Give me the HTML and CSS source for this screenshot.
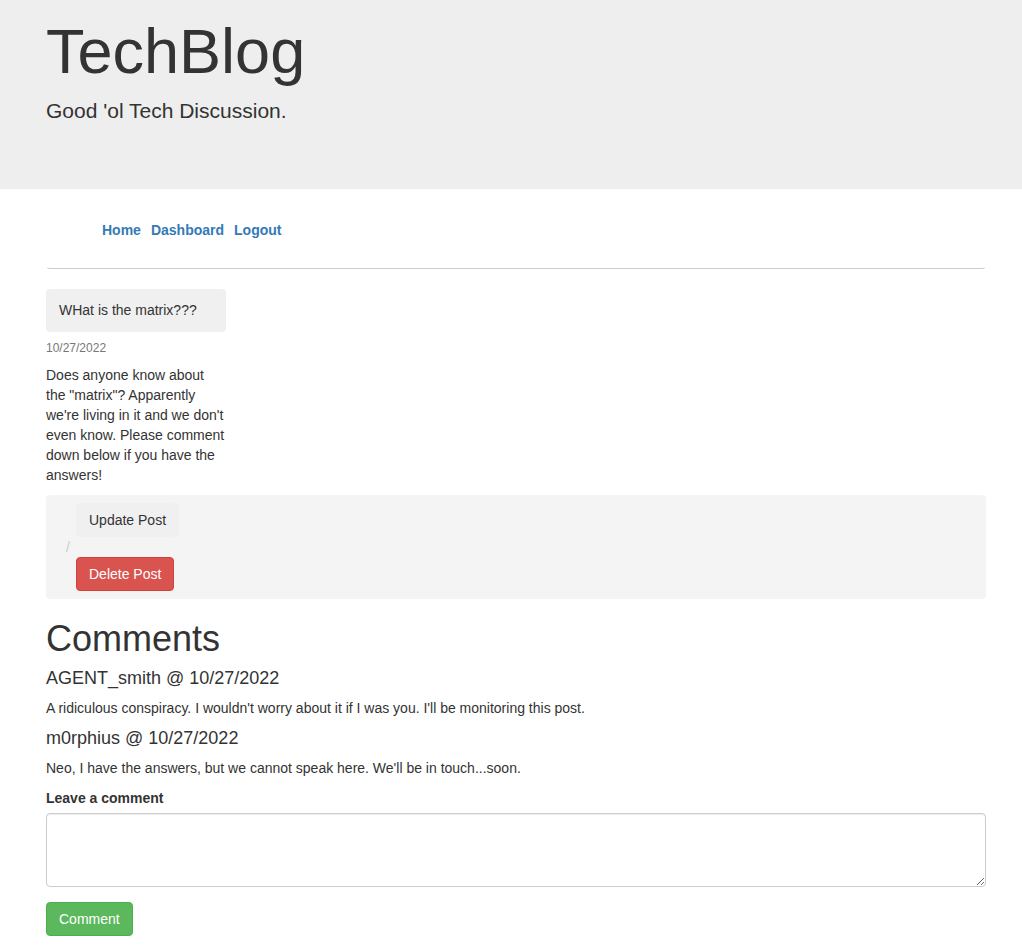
FILE: index.html
```html
<!DOCTYPE html>
<html lang="en">
<head>
<meta charset="utf-8">
<meta name="viewport" content="width=device-width, initial-scale=1">
<title>TechBlog</title>
<link rel="stylesheet" href="styles.css">
</head>
<body>
<header class="jumbotron">
  <h1 class="brand">TechBlog</h1>
  <p class="lead">Good 'ol Tech Discussion.</p>
</header>
<nav class="nav">
  <a href="#">Home</a>
  <a href="#">Dashboard</a>
  <a href="#">Logout</a>
</nav>
<main class="content">
  <article class="post">
    <div class="post-title">WHat is the matrix???</div>
    <time class="post-date">10/27/2022</time>
    <p class="post-body">Does anyone know about the "matrix"? Apparently we're living in it and we don't even know. Please comment down below if you have the answers!</p>
  </article>
  <ul class="actions">
    <li><button type="button" class="btn btn-plain">Update Post</button></li>
    <li class="actions-next"><button type="button" class="btn btn-danger">Delete Post</button></li>
  </ul>
  <section class="comments">
    <h2 class="comments-title">Comments</h2>
    <h4 class="comment-author">AGENT_smith @ 10/27/2022</h4>
    <p class="comment-text">A ridiculous conspiracy. I wouldn't worry about it if I was you. I'll be monitoring this post.</p>
    <h4 class="comment-author">m0rphius @ 10/27/2022</h4>
    <p class="comment-text">Neo, I have the answers, but we cannot speak here. We'll be in touch...soon.</p>
  </section>
  <form class="comment-form">
    <label for="comment">Leave a comment</label>
    <textarea id="comment" class="field" rows="3"></textarea>
    <button type="submit" class="btn btn-success">Comment</button>
  </form>
</main>
</body>
</html>
```

FILE: styles.css
```css
* {
  box-sizing: border-box;
}

body {
  margin: 0;
  background: #fff;
  color: #333;
  font: 14px/20px "Liberation Sans", Arial, sans-serif;
}

.jumbotron {
  padding: 17px 36px 63px 46px;
  background: #eee;
}

.brand {
  margin: 0 0 10px;
  font-size: 63px;
  font-weight: 500;
  line-height: 69px;
}

.lead {
  margin: 0;
  font-size: 21px;
  line-height: 30px;
}

.nav {
  display: flex;
  gap: 10px;
  margin: 10px 36px 20px 46px;
  padding: 20px 0 28px 55px;
  border: 1px solid transparent;
  border-bottom-color: #ccc;
  border-radius: 4px;
}

.nav a {
  color: #337ab7;
  font-weight: 700;
  text-decoration: none;
}

.content {
  padding: 0 36px 16px 46px;
}

.post {
  width: 180px;
}

.post-title {
  padding: 11px 13px 12px;
  border-radius: 4px;
  background: #f0f0f0;
}

.post-date {
  display: block;
  margin: 6px 0 7px;
  color: #777;
  font-size: 12px;
}

.post-body {
  margin: 0 0 10px;
}

.actions {
  margin: 0 0 20px;
  padding: 8px 15px;
  border-radius: 4px;
  background: #f4f4f4;
  list-style: none;
}

.actions li {
  padding-left: 15px;
}

.actions-next::before {
  content: "/";
  display: block;
  margin-left: -10px;
  color: #ccc;
}

.btn {
  display: block;
  padding: 6px 12px;
  border: 1px solid transparent;
  border-radius: 4px;
  color: #fff;
  font: inherit;
  cursor: pointer;
}

.btn-plain {
  background: #f0f0f0;
  color: #333;
}

.btn-danger {
  border-color: #d43f3a;
  background: #d9534f;
}

.btn-success {
  border-color: #4cae4c;
  background: #5cb85c;
}

.comments-title {
  margin: 0 0 9px;
  font-size: 36px;
  font-weight: 500;
  line-height: 40px;
}

.comment-author {
  margin: 0 0 10px;
  font-size: 18px;
  font-weight: 500;
  line-height: 20px;
}

.comment-text {
  margin: 0 0 10px;
}

.comment-form label {
  display: block;
  margin-bottom: 5px;
  font-weight: 700;
}

.field {
  display: block;
  width: 100%;
  margin-bottom: 15px;
  padding: 6px 12px;
  border: 1px solid #ccc;
  border-radius: 4px;
  box-shadow: inset 0 1px 1px rgba(0, 0, 0, 0.075);
  color: #555;
  font: inherit;
  resize: vertical;
}
```
